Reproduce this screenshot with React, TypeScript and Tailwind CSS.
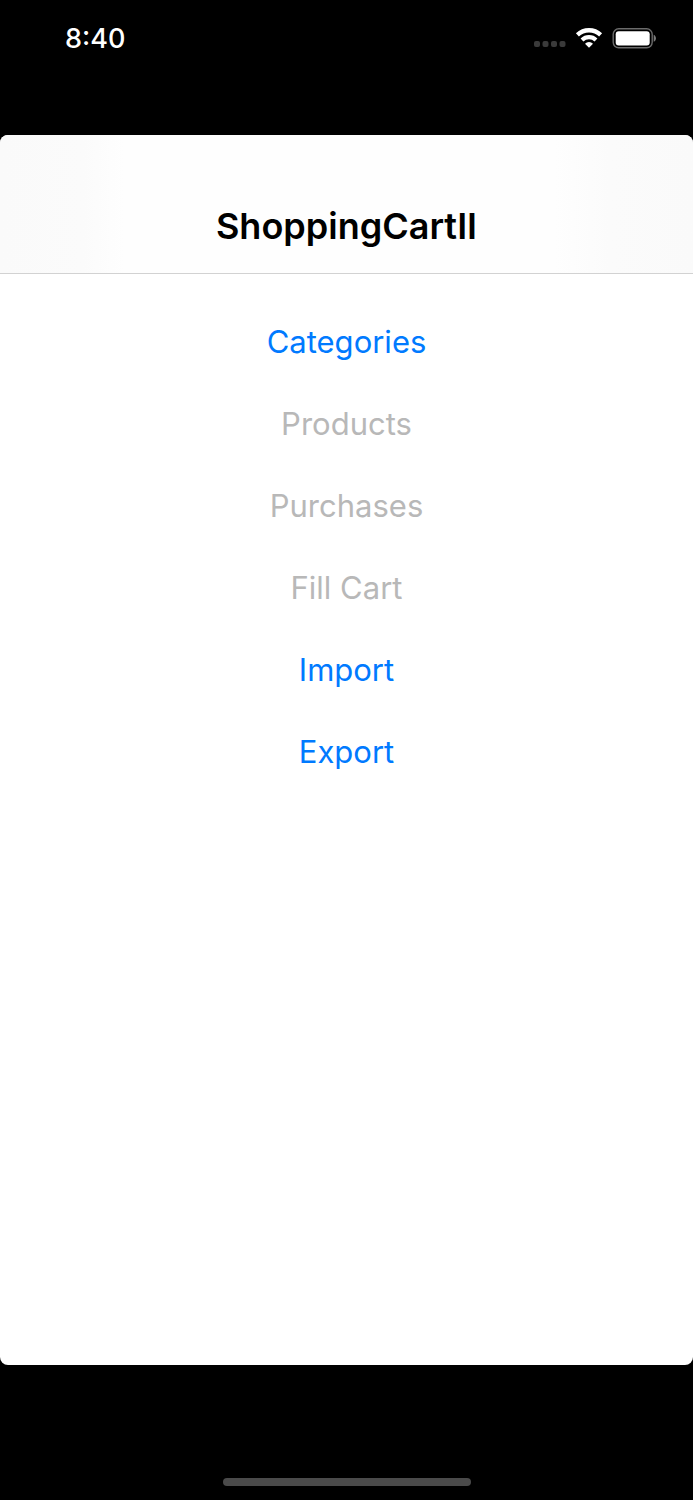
type MenuItem = {
  label: string;
  enabled: boolean;
};

const menuItems: MenuItem[] = [
  { label: 'Categories', enabled: true },
  { label: 'Products', enabled: false },
  { label: 'Purchases', enabled: false },
  { label: 'Fill Cart', enabled: false },
  { label: 'Import', enabled: true },
  { label: 'Export', enabled: true },
];

function CellularIcon() {
  return (
    <svg width="32" height="6" viewBox="0 0 32 6" fill="#3a3a3a" aria-hidden>
      <rect x="0" y="0" width="6" height="6" rx="2" />
      <rect x="8.5" y="0" width="6" height="6" rx="2" />
      <rect x="17" y="0" width="6" height="6" rx="2" />
      <rect x="25.5" y="0" width="6" height="6" rx="2" />
    </svg>
  );
}

function WifiIcon() {
  return (
    <svg width="28" height="20" viewBox="0 0 28 20" fill="none" stroke="#fff" aria-hidden>
      <path d="M2.4 6.9a16.8 16.8 0 0 1 23.2 0" strokeWidth="4.3" />
      <path d="M7 11.9a10.2 10.2 0 0 1 14 0" strokeWidth="4.1" />
      <path d="M14 19.8l-4-4.1a5.6 5.6 0 0 1 8 0z" fill="#fff" stroke="none" />
    </svg>
  );
}

function BatteryIcon() {
  return (
    <svg width="44" height="21" viewBox="0 0 44 21" fill="none" aria-hidden>
      <rect x="1.2" y="0.8" width="39" height="19" rx="5.5" stroke="#6b6b6b" strokeWidth="1.4" />
      <rect x="3.7" y="3.2" width="34" height="14.2" rx="3" fill="#fff" />
      <path d="M41.7 6.8c1.4.6 2.2 1.9 2.2 3.5s-.8 2.9-2.2 3.5z" fill="#7a7a7a" />
    </svg>
  );
}

function StatusBar() {
  return (
    <header className="flex h-[135px] shrink-0 items-start justify-between px-[37px] pt-5 text-white">
      <time className="pl-7 text-[27px] leading-[38px] font-medium">8:40</time>
      <div className="flex h-9 items-center gap-[9px]">
        <div className="pt-3">
          <CellularIcon />
        </div>
        <WifiIcon />
        <BatteryIcon />
      </div>
    </header>
  );
}

export default function App() {
  return (
    <div className="flex min-h-screen flex-col bg-black font-['Inter','Liberation_Sans',sans-serif]">
      <StatusBar />

      <main className="flex flex-1 flex-col overflow-hidden rounded-lg bg-white">
        {/* Navigation bar, faintly tinted towards both edges */}
        <div className="border-b border-[#d2d2d2] bg-[linear-gradient(to_right,#fafafa,#fbfbfb_12%,#fefefe_18%,#fefefe_80%,#fbfbfb_88%,#fafafa)] pt-[63px] pb-[19px]">
          <h1 className="text-center text-[36px] leading-[56px] font-semibold text-black">ShoppingCartII</h1>
        </div>

        <nav className="flex flex-col items-center pt-[27px]">
          {menuItems.map((item) => (
            <button
              key={item.label}
              disabled={!item.enabled}
              className="h-[82px] px-4 text-[31px] leading-10 text-[#007aff] disabled:text-[#b8b8b8]"
            >
              {item.label}
            </button>
          ))}
        </nav>
      </main>

      {/* Home indicator */}
      <footer className="flex h-[135px] shrink-0 items-end justify-center pb-[14px]">
        <div className="h-2 w-[248px] rounded-full bg-[#4a4a4a]" />
      </footer>
    </div>
  );
}
